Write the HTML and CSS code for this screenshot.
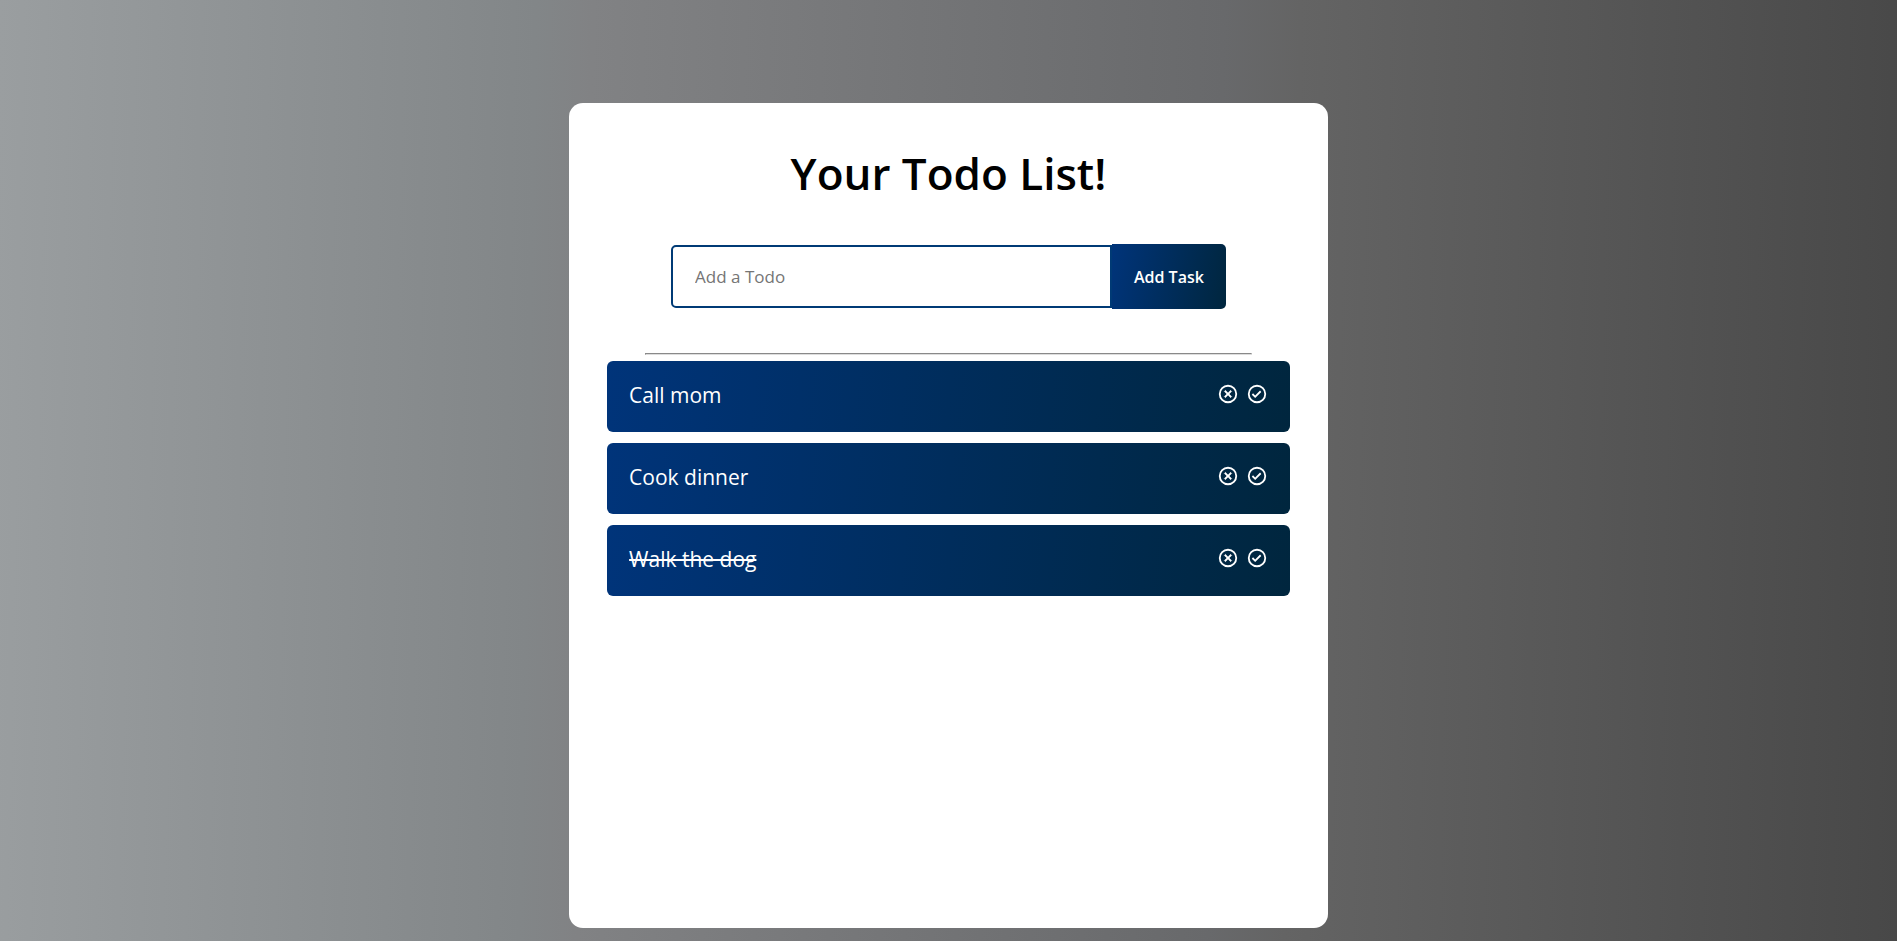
FILE: index.html
```html
<!DOCTYPE html>
<html lang="en">
<head>
<meta charset="utf-8">
<title>Todo List</title>
<link rel="stylesheet" href="styles.css">
</head>
<body>
<svg class="sprite" aria-hidden="true">
  <symbol id="remove" viewBox="0 0 24 24"><path d="M9.2 8 12 10.8 14.8 8 16 9.2 13.2 12 16 14.8 14.8 16 12 13.2 9.2 16 8 14.8 10.8 12 8 9.2z" stroke="currentColor" stroke-width=".6"/><path d="M12 2a10 10 0 1 0 0 20 10 10 0 0 0 0-20zm0 18a8 8 0 1 1 0-16 8 8 0 0 1 0 16z"/></symbol>
  <symbol id="done" viewBox="0 0 24 24"><path d="M12 2a10 10 0 1 0 0 20 10 10 0 0 0 0-20zm0 18a8 8 0 1 1 0-16 8 8 0 0 1 0 16z"/><path d="M10 13.6 7.7 11.3 6.3 12.7 10 16.4 16.7 9.7 15.3 8.3z"/></symbol>
</svg>
<main class="todo-app">
  <h1 class="title">Your Todo List!</h1>
  <form class="todo-form">
    <input class="todo-input" type="text" placeholder="Add a Todo" aria-label="Add a Todo">
    <button class="todo-button" type="button">Add Task</button>
  </form>
  <hr class="divider">
  <ul class="todo-list">
    <li class="todo-row"><span class="text">Call mom</span><span class="icons"><button class="icon" type="button" aria-label="Delete Call mom"><svg><use href="#remove"/></svg></button><button class="icon" type="button" aria-label="Complete Call mom"><svg><use href="#done"/></svg></button></span></li>
    <li class="todo-row"><span class="text">Cook dinner</span><span class="icons"><button class="icon" type="button" aria-label="Delete Cook dinner"><svg><use href="#remove"/></svg></button><button class="icon" type="button" aria-label="Complete Cook dinner"><svg><use href="#done"/></svg></button></span></li>
    <li class="todo-row complete"><span class="text">Walk the dog</span><span class="icons"><button class="icon" type="button" aria-label="Delete Walk the dog"><svg><use href="#remove"/></svg></button><button class="icon" type="button" aria-label="Complete Walk the dog"><svg><use href="#done"/></svg></button></span></li>
  </ul>
</main>
</body>
</html>
```
FILE: styles.css
```css
* { box-sizing: border-box; }
body {
  margin: 0;
  min-height: 100vh;
  padding: 103px 0 13px;
  display: flex;
  justify-content: center;
  font-family: "Trebuchet MS", "Open Sans", sans-serif;
  background: linear-gradient(91deg, #9a9ea0 0%, #828688 28%, #818284 31%, #68696b 64%, #646464 68%, #484848 100%);
}
.sprite { position: absolute; width: 0; height: 0; }
.todo-app {
  width: 40%;
  padding: 38px;
  background: #fff;
  border-radius: 14px;
}
.title {
  margin: 0;
  font-size: 44px;
  line-height: 64px;
  font-weight: 600;
  text-align: center;
}
.todo-form {
  display: flex;
  justify-content: center;
  align-items: center;
  margin: 39px 64px 44px;
}
.todo-input {
  flex: 1;
  min-width: 0;
  height: 63px;
  padding: 0 22px;
  border: 2px solid #003a75;
  border-radius: 5px 0 0 5px;
  font: 17px/24px "Trebuchet MS", "Open Sans", sans-serif;
}
.todo-input::placeholder { color: #757575; }
.todo-button {
  height: 65px;
  padding: 0 22px;
  border: 0;
  border-radius: 0 5px 5px 0;
  color: #fff;
  background: linear-gradient(99deg, #00347a, #00263e);
  font: 600 16px/24px "Trebuchet MS", "Open Sans", sans-serif;
}
.divider { width: 607px; max-width: 100%; margin: 0 auto 6px; border: 1px inset #ddd; }
.todo-list {
  display: grid;
  gap: 11px;
  margin: 0;
  padding: 0;
  list-style: none;
}
.todo-row {
  display: flex;
  justify-content: space-between;
  align-items: center;
  height: 71px;
  padding: 0 22px 3px;
  border-radius: 6px;
  color: #fff;
  font-size: 21px;
  line-height: 32px;
  background: linear-gradient(95deg, #00347a, #00263e);
}
.complete .text { text-decoration: line-through 2px; }
.icons { display: flex; gap: 7px; padding-bottom: 3px; }
.icon { display: flex; padding: 0; border: 0; color: inherit; background: none; }
.icon svg { width: 22px; height: 22px; fill: currentColor; }
```
